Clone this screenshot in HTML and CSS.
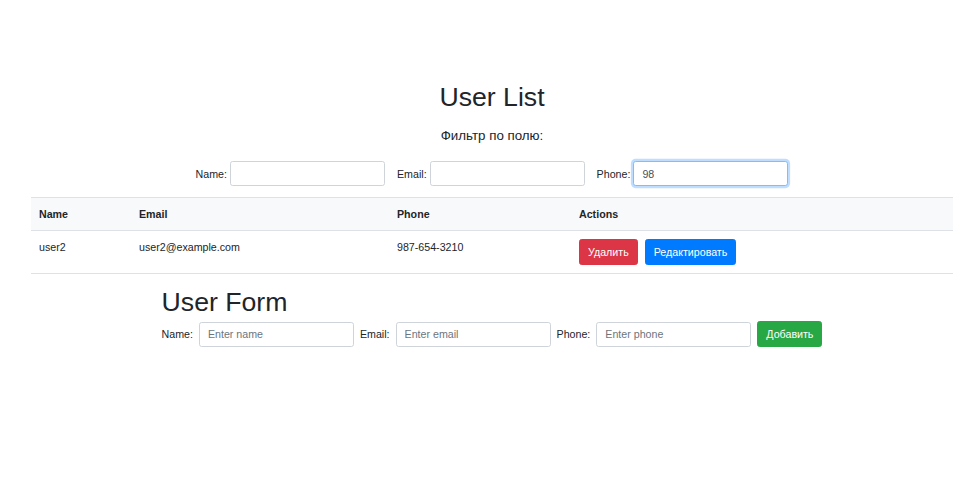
FILE: index.html
```html
<!DOCTYPE html>
<html lang="ru">
<head>
<meta charset="utf-8">
<title>User List</title>
<link rel="stylesheet" href="styles.css">
</head>
<body>
<div class="app">
  <h1 class="title">User List</h1>
  <p class="filter-caption">Фильтр по полю:</p>
  <div class="filter-row">
    <div class="field"><label for="f-name">Name:</label><input id="f-name" class="input" type="text"></div>
    <div class="field"><label for="f-email">Email:</label><input id="f-email" class="input" type="text"></div>
    <div class="field"><label for="f-phone">Phone:</label><input id="f-phone" class="input focused" type="text" value="98" autofocus></div>
  </div>
  <table class="users">
    <thead>
      <tr>
        <th class="c-name">Name</th>
        <th class="c-email">Email</th>
        <th class="c-phone">Phone</th>
        <th class="c-actions">Actions</th>
      </tr>
    </thead>
    <tbody>
      <tr>
        <td>user2</td>
        <td>user2@example.com</td>
        <td>987-654-3210</td>
        <td><div class="actions"><button class="btn btn-danger">Удалить</button><button class="btn btn-primary">Редактировать</button></div></td>
      </tr>
    </tbody>
  </table>
  <div class="form-section">
    <h1 class="form-title">User Form</h1>
    <form class="form-row">
      <label for="u-name">Name:</label>
      <input id="u-name" class="input" type="text" placeholder="Enter name">
      <label for="u-email">Email:</label>
      <input id="u-email" class="input" type="text" placeholder="Enter email">
      <label for="u-phone">Phone:</label>
      <input id="u-phone" class="input" type="text" placeholder="Enter phone">
      <button type="button" class="btn btn-success">Добавить</button>
    </form>
  </div>
</div>
</body>
</html>
```

FILE: styles.css
```css
* { box-sizing: border-box; }

body {
  margin: 0;
  background: #fff;
  color: #212529;
  font-family: "Liberation Sans", Arial, sans-serif;
  font-size: 10.67px;
  line-height: 1.5;
}

.app {
  margin-left: 31px;
  width: 922px;
  padding-top: 81px;
}

.title,
.form-title {
  font-size: 26.67px;
  font-weight: 500;
  line-height: 1.2;
  margin: 0;
}

.title {
  text-align: center;
  margin-bottom: 15px;
}

.filter-caption {
  margin: 0 0 17px;
  text-align: center;
  font-size: 13.33px;
  line-height: 16px;
}

.filter-row {
  display: flex;
  justify-content: center;
  align-items: center;
  gap: 12px;
  margin-bottom: 11px;
}

.field {
  display: flex;
  align-items: center;
  gap: 3px;
}

.input {
  width: 155px;
  height: 25px;
  padding: 4px 8px;
  border: 1px solid #ced4da;
  border-radius: 2.67px;
  background: #fff;
  color: #495057;
  font-family: inherit;
  font-size: 10.67px;
  line-height: 16px;
  outline: none;
}

.input::placeholder {
  color: #6c757d;
  opacity: 1;
}

.input.focused,
.input:focus {
  border-color: #80bdff;
  box-shadow: 0 0 0 2.13px rgba(0, 123, 255, 0.25);
}

.users {
  width: 922px;
  border-collapse: collapse;
}

.users th,
.users td {
  padding: 8px;
  text-align: left;
  vertical-align: top;
  line-height: 16px;
}

.users th {
  background: #f8f9fa;
  font-weight: bold;
  border-top: 1px solid #dee2e6;
  border-bottom: 1px solid #dee2e6;
  vertical-align: bottom;
}

.users td {
  border-bottom: 1px solid #dee2e6;
}

.c-name { width: 100px; }
.c-email { width: 258px; }
.c-phone { width: 182px; }

.actions {
  display: flex;
  gap: 7px;
}

.btn {
  display: inline-block;
  height: 26px;
  padding: 4px 8px;
  border: 1px solid transparent;
  border-radius: 2.67px;
  color: #fff;
  font-family: inherit;
  font-size: 10.67px;
  line-height: 16px;
  cursor: pointer;
}

.btn-danger { background: #dc3545; border-color: #dc3545; }
.btn-primary { background: #007bff; border-color: #007bff; }
.btn-success { background: #28a745; border-color: #28a745; }

.form-section {
  width: fit-content;
  margin: 12px auto 0;
}

.form-title {
  margin-bottom: 3px;
}

.form-row {
  display: flex;
  align-items: center;
  gap: 6px;
  margin: 0;
}
```
